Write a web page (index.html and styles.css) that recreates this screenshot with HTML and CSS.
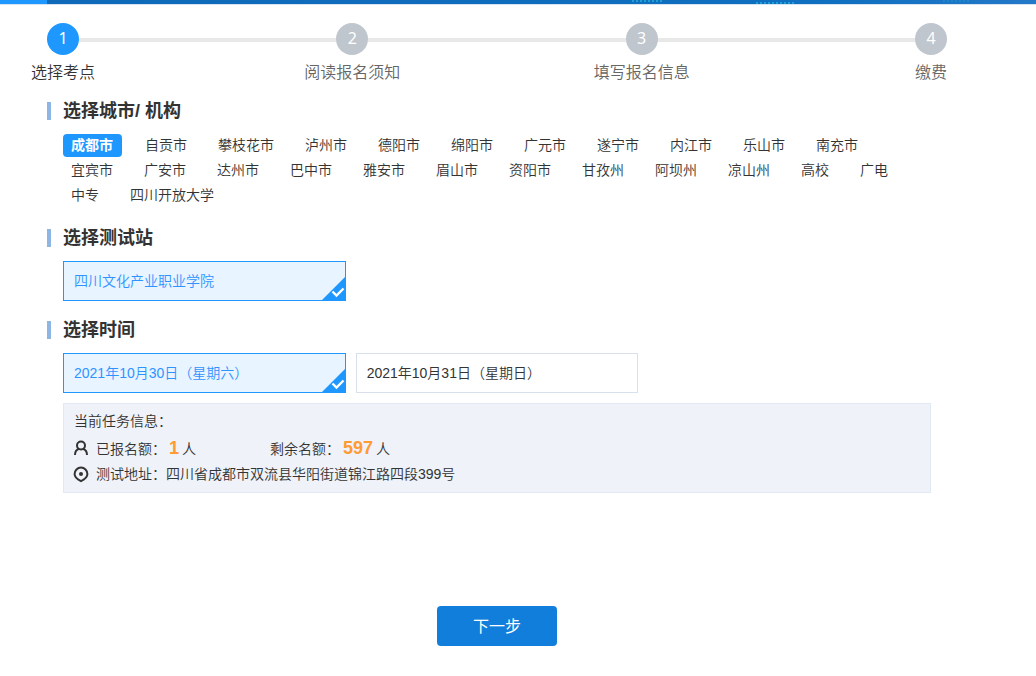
FILE: index.html
```html
<!DOCTYPE html>
<html lang="zh-CN">
<head>
    <meta charset="UTF-8">
    <title>选择考点</title>
    <link rel="stylesheet" href="styles.css">
</head>
<body>
<div class="banner">
    <i class="banner-logo"></i>
    <i class="dots dots-a"></i>
    <i class="dots dots-b"></i>
    <i class="dots dots-c"></i>
</div>
<div class="main">
    <!-- 步骤条 -->
    <div class="steps">
        <div class="step current"><span class="num">1</span><span class="step-name">选择考点</span></div>
        <div class="step-line"></div>
        <div class="step"><span class="num">2</span><span class="step-name">阅读报名须知</span></div>
        <div class="step-line"></div>
        <div class="step"><span class="num">3</span><span class="step-name">填写报名信息</span></div>
        <div class="step-line"></div>
        <div class="step"><span class="num">4</span><span class="step-name">缴费</span></div>
    </div>

    <div class="section">
        <h3 class="title">选择城市/ 机构</h3>
        <div class="city-list">
            <button type="button" class="city current">成都市</button>
            <button type="button" class="city">自贡市</button>
            <button type="button" class="city">攀枝花市</button>
            <button type="button" class="city">泸州市</button>
            <button type="button" class="city">德阳市</button>
            <button type="button" class="city">绵阳市</button>
            <button type="button" class="city">广元市</button>
            <button type="button" class="city">遂宁市</button>
            <button type="button" class="city">内江市</button>
            <button type="button" class="city">乐山市</button>
            <button type="button" class="city">南充市</button>
            <button type="button" class="city">宜宾市</button>
            <button type="button" class="city">广安市</button>
            <button type="button" class="city">达州市</button>
            <button type="button" class="city">巴中市</button>
            <button type="button" class="city">雅安市</button>
            <button type="button" class="city">眉山市</button>
            <button type="button" class="city">资阳市</button>
            <button type="button" class="city">甘孜州</button>
            <button type="button" class="city">阿坝州</button>
            <button type="button" class="city">凉山州</button>
            <button type="button" class="city">高校</button>
            <button type="button" class="city">广电</button>
            <button type="button" class="city">中专</button>
            <button type="button" class="city">四川开放大学</button>
        </div>
    </div>

    <div class="section">
        <h3 class="title">选择测试站</h3>
        <div class="option-list">
            <button type="button" class="option current">四川文化产业职业学院
                <svg class="tick" viewBox="0 0 25 25"><path d="M25 0V25H0z" fill="#1e98ff"/><path d="M11.500 15.500l4 4 7-7" fill="none" stroke="#fff" stroke-width="2.400"/></svg>
            </button>
        </div>
    </div>

    <div class="section">
        <h3 class="title">选择时间</h3>
        <div class="option-list">
            <button type="button" class="option current">2021年10月30日（星期六）
                <svg class="tick" viewBox="0 0 25 25"><path d="M25 0V25H0z" fill="#1e98ff"/><path d="M11.500 15.500l4 4 7-7" fill="none" stroke="#fff" stroke-width="2.400"/></svg>
            </button>
            <button type="button" class="option">2021年10月31日（星期日）</button>
        </div>
        <!-- 当前任务 -->
        <div class="info">
            <p class="info-title">当前任务信息：</p>
            <p class="row">
                <svg class="icon" viewBox="0 0 14 14"><circle cx="7" cy="4.500" r="4"/><path d="M1 14c0-3.400 1.800-5.600 4.200-6.200M13 14c0-3.400-1.800-5.600-4.200-6.200"/></svg>
                <span class="enrolled">已报名额：<b>1</b>人</span>
                <span>剩余名额：<b>597</b>人</span>
            </p>
            <p class="row">
                <svg class="icon" viewBox="0 0 14 14"><path d="M7 14.200C4.500 13 .6 10.900 .6 7a6.400 6.400 0 0 1 12.800 0C13.400 10.900 9.500 13 7 14.200z"/><circle class="dot" cx="7" cy="7" r="2"/></svg>
                <span>测试地址：四川省成都市双流县华阳街道锦江路四段399号</span>
            </p>
        </div>
    </div>

    <button type="button" class="next">下一步</button>
</div>
</body>
</html>
```

FILE: styles.css
```css
* {
    padding: 0;
    margin: 0;
    box-sizing: border-box;
}

body {
    background: #fff;
    color: #333;
    font-family: "Liberation Sans", "Noto Sans CJK SC", sans-serif;
    font-size: 14px;
    font-weight: 350;
}

button {
    border: 0;
    background: none;
    color: inherit;
    font: inherit;
    cursor: pointer;
}

.banner {
    display: flex;
    position: relative;
    height: 5px;
    border-bottom: 1px solid #d5e3f2;
    background: linear-gradient(to right, #0f69b8 0%, #0f6fc0 80%, #2478c8 100%);
}

.banner-logo {
    width: 47px;
    background: #1e98ff;
}

/* 头图底部的点阵 */
.dots {
    position: absolute;
    top: 0;
    height: 2px;
    background: repeating-linear-gradient(to right, #1f9fd2 0, #1f9fd2 2px, transparent 2px, transparent 4px);
}

.dots-a {
    left: 61%;
    width: 30px;
}

.dots-b {
    top: 2px;
    left: 73%;
    width: 40px;
}

.dots-c {
    left: 91%;
    width: 26px;
    opacity: 0.4;
}

.main {
    max-width: 947px;
    padding: 18px 0 30px 47px;
}

.steps {
    display: flex;
    margin-bottom: 18px;
}

.step {
    display: flex;
    flex-direction: column;
    align-items: center;
    width: 32px;
    color: #666;
    font-size: 16px;
}

.step-line {
    flex: 1;
    height: 4px;
    margin-top: 15px;
    background: #e8e8e8;
}

.num {
    width: 32px;
    height: 32px;
    margin-bottom: 7px;
    border-radius: 50%;
    background: #bfc6cd;
    color: #fff;
    font-family: "Noto Sans", "Open Sans", sans-serif;
    font-weight: 400;
    line-height: 30px;
    text-align: center;
}

.step-name {
    line-height: 22px;
    white-space: nowrap;
}

.step.current {
    color: #333;
}

.step.current .num {
    background: #1e98ff;
}

.section {
    margin-bottom: 20px;
}

.title {
    margin-bottom: 14px;
    padding-left: 12px;
    border-left: 4px solid #8fb5e3;
    font-size: 18px;
    line-height: 18px;
}

.city-list {
    display: flex;
    flex-wrap: wrap;
    column-gap: 15px;
    padding: 0 16px;
}

.city {
    height: 23px;
    margin-bottom: 2px;
    padding: 0 8px;
    border-radius: 4px;
    line-height: 23px;
}

.city.current {
    padding-right: 9px;
    background: #1e98ff;
    color: #fff;
    font-weight: bold;
}

.option-list {
    display: grid;
    grid-template-columns: repeat(3, 1fr);
    gap: 10px;
    padding: 0 16px;
}

.option {
    position: relative;
    height: 40px;
    padding: 0 10px 2px;
    border: 1px solid #d8e0eb;
    text-align: left;
}

.option.current {
    border-color: #1e98ff;
    background: #e8f4ff;
    color: #2f93ff;
}

.tick {
    position: absolute;
    right: -1px;
    bottom: -1px;
    width: 25px;
    height: 25px;
}

.info {
    margin: 10px 16px 0;
    padding: 4px 10px 5px;
    border: 1px solid #e0e8f1;
    background: #eff2f8;
    line-height: 26px;
}

.info-title {
    margin-bottom: 1px;
}

.info b {
    margin: 0 3px;
    color: #ff9b30;
    font-size: 18px;
    font-weight: bold;
}

.row {
    display: flex;
    align-items: center;
    height: 26px;
}

.icon {
    width: 14px;
    height: 14px;
    margin-right: 8px;
    overflow: visible;
    fill: none;
    stroke: #333;
    stroke-width: 2;
}

.icon .dot {
    fill: #333;
    stroke: none;
}

.enrolled {
    width: 174px;
}

.next {
    display: block;
    width: 120px;
    height: 40px;
    margin: 113px auto 0;
    padding-bottom: 2px;
    border-radius: 4px;
    background: #117edb;
    color: #fff;
    font-size: 16px;
    font-weight: 400;
}
```
